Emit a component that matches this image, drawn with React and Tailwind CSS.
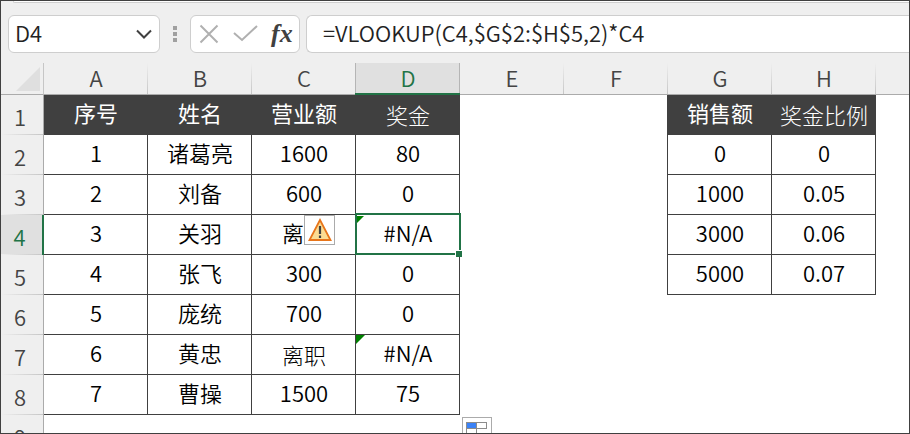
import React, { useState } from "react";

const columns = ["A", "B", "C", "D", "E", "F", "G", "H"];

const rows = [
  ["序号", "姓名", "营业额", "奖金", "", "", "销售额", "奖金比例"],
  ["1", "诸葛亮", "1600", "80", "", "", "0", "0"],
  ["2", "刘备", "600", "0", "", "", "1000", "0.05"],
  ["3", "关羽", "离职", "#N/A", "", "", "3000", "0.06"],
  ["4", "张飞", "300", "0", "", "", "5000", "0.07"],
  ["5", "庞统", "700", "0"],
  ["6", "黄忠", "离职", "#N/A"],
  ["7", "曹操", "1500", "75"],
  [],
];

const active = { row: 3, col: 3 };

// Cells typed in with the thinner face
const thinCells = ["0-3", "0-7", "6-2"];

const cellClass = (row, col) => {
  const value = rows[row][col];
  const next = rows[row][col + 1];
  const thin = thinCells.includes(`${row}-${col}`);
  let cls = "relative p-0 pl-px text-center ";
  if (row === 0 && value) {
    cls += "bg-[#404040] text-white border-b border-r border-[#404040] ";
    cls += thin ? "font-light pb-[2px]" : "font-normal pb-[6px]";
    return cls;
  }
  cls += thin ? "font-light pb-[2px] " : "font-[350] pb-[6px] ";
  if (value) cls += "border-b border-r border-[#404040]";
  else if (next) cls += "border-r border-[#404040]";
  return cls;
};

const FormulaBar = () => {
  const [name, setName] = useState("D4");
  const [formula, setFormula] = useState("=VLOOKUP(C4,$G$2:$H$5,2)*C4");

  return (
    <div className="flex h-[62px] flex-col">
      <div className="ml-3 h-[2px] shrink-0 rounded-bl-md border-b border-l border-[#cfcfcf] bg-white" />
      <div className="flex items-center pt-3 pl-[7px]">
        <div className="flex h-[38px] w-[152px] shrink-0 items-center rounded-md border border-[#cecece] bg-white">
          <input
            aria-label="Name box"
            className="h-full w-24 bg-transparent pb-1 pl-[6px] text-[22px] font-[350] text-[#222] outline-none"
            value={name}
            onChange={(e) => setName(e.target.value)}
          />
          <button type="button" aria-label="Open name list" className="ml-auto mr-[7px]">
            <svg className="h-4 w-4" viewBox="0 0 16 16" fill="none" stroke="#404040" strokeWidth="2">
              <path d="M1 4.5 8 11.5 15 4.5" />
            </svg>
          </button>
        </div>
        <div className="ml-[13px] flex w-1 shrink-0 flex-col gap-[2px]">
          <span className="h-1 w-1 bg-[#a0a0a0]" />
          <span className="h-1 w-1 bg-[#a0a0a0]" />
          <span className="h-1 w-1 bg-[#a0a0a0]" />
        </div>
        <div className="ml-[13px] flex h-[38px] w-[110px] shrink-0 items-center rounded-md border border-[#cecece] bg-white pl-2">
          <button type="button" aria-label="Cancel">
            <svg className="h-5 w-5" viewBox="0 0 20 20" fill="none" stroke="#b0b0b0" strokeWidth="2">
              <path d="M1.5 1.5 18.5 18.5M18.5 1.5 1.5 18.5" />
            </svg>
          </button>
          <button type="button" aria-label="Enter" className="ml-3">
            <svg className="h-5 w-7" viewBox="0 0 28 20" fill="none" stroke="#b0b0b0" strokeWidth="2">
              <path d="M3 9 11 16 26 2" />
            </svg>
          </button>
          <button
            type="button"
            aria-label="Insert function"
            className="ml-3 font-['Liberation_Serif',serif] text-[26px] leading-7 font-bold text-[#404040] italic"
          >
            fx
          </button>
        </div>
        <input
          aria-label="Formula"
          className="ml-[6px] h-[38px] min-w-0 flex-1 rounded-l-md border border-r-0 border-[#cecece] bg-white pb-1 pl-4 text-[22px] font-[350] text-[#222] outline-none"
          value={formula}
          onChange={(e) => setFormula(e.target.value)}
        />
      </div>
    </div>
  );
};

const WarningButton = () => (
  <button
    type="button"
    aria-label="Error options"
    className="absolute top-0 left-[52px] z-10 flex h-[30px] w-[31px] items-center justify-center border border-[#ababab] bg-white"
  >
    <svg className="h-6 w-6" viewBox="0 0 24 24">
      <path d="M12 2 22.500 22H1.500Z" fill="#fbdc93" stroke="#e8751a" strokeWidth="1.800" />
      <path d="M12 8V16M12 17.500V20" stroke="#404040" strokeWidth="2.200" />
    </svg>
  </button>
);

const FillOptions = () => (
  <button
    type="button"
    aria-label="Auto fill options"
    className="absolute top-[2px] left-[2px] z-10 h-[30px] w-[30px] border border-[#ababab] bg-white"
  >
    <svg className="h-7 w-7" viewBox="0 0 28 28" fill="none" stroke="#8c8c8c">
      <rect x="3.500" y="4.500" width="10" height="6" fill="#3b82f6" />
      <rect x="13.500" y="4.500" width="10" height="6" />
      <path d="M3.500 10.500V23.500H13.500V10.500" />
    </svg>
  </button>
);

const Cell = ({ row, col }) => {
  const value = rows[row][col];
  const isActive = row === active.row && col === active.col;

  return (
    <td className={cellClass(row, col)}>
      {value}
      {value === "#N/A" && (
        <span
          className={
            isActive
              ? "absolute top-px left-px h-[7px] w-[7px] bg-[#008000] [clip-path:polygon(0_0,100%_0,0_100%)]"
              : "absolute top-0 left-0 h-[9px] w-[9px] bg-[#008000] [clip-path:polygon(0_0,100%_0,0_100%)]"
          }
        />
      )}
      {isActive && (
        <span className="absolute -top-[2px] -right-[2px] -bottom-px -left-px z-20 border-2 border-[#217346]">
          <span className="absolute -right-[3px] -bottom-[4px] h-[7px] w-[7px] border-t border-l border-white bg-[#217346]" />
        </span>
      )}
      {row === 3 && col === 2 && <WarningButton />}
      {row === 8 && col === 4 && <FillOptions />}
    </td>
  );
};

const Sheet = () => (
  <table className="w-full table-fixed border-separate border-spacing-0 text-[22px] leading-8 text-black">
    <colgroup>
      <col className="w-[43px]" />
      {columns.map((c) => (
        <col key={c} className="w-[104px]" />
      ))}
      <col />
    </colgroup>
    <thead className="leading-7">
      <tr className="h-8 text-[#444]">
        <th className="relative border-r border-b border-[#ababab] border-r-[#c6c6c6] bg-[#efefef] p-0">
          <span className="absolute right-[3px] bottom-[3px] h-6 w-6 bg-[#dfdfdf] [clip-path:polygon(100%_0,100%_100%,0_100%)]" />
        </th>
        {columns.map((c, i) => (
          <th
            key={c}
            scope="col"
            className={
              i === active.col
                ? "relative bg-[#e0e0e0] p-0 pb-1 font-[350] text-[#217346]"
                : "relative border-b border-[#ababab] bg-[#efefef] p-0 pb-[3px] font-[350]"
            }
          >
            {c}
            {i === active.col ? (
              <>
                <span className="absolute -left-px top-0 bottom-0 w-px bg-[#b5b5b5]" />
                <span className="absolute right-0 top-0 bottom-0 w-px bg-[#b5b5b5]" />
                <span className="absolute -left-px right-0 bottom-0 h-[2px] bg-[#217346]" />
              </>
            ) : (
              <span className="absolute right-0 top-0 bottom-0 w-px bg-linear-to-b from-[#efefef] to-[#c6c6c6]" />
            )}
          </th>
        ))}
        <th className="border-b border-[#ababab] bg-[#efefef] p-0" />
      </tr>
    </thead>
    <tbody>
      {rows.map((_, r) => (
        <tr key={r} className="h-10">
          <th
            scope="row"
            className={
              r === active.row
                ? "relative border-r-2 border-[#217346] bg-[#e0e0e0] p-0 pt-[2px] pr-1 font-[350] text-[#217346]"
                : "relative border-r border-[#ababab] bg-[#efefef] p-0 pt-[2px] pr-1 font-[350] text-[#444]"
            }
          >
            {r + 1}
            <span className="absolute right-0 bottom-0 left-0 h-px bg-linear-to-r from-[#efefef] to-[#c6c6c6]" />
          </th>
          {columns.map((c, i) => (
            <Cell key={c} row={r} col={i} />
          ))}
          <td className="p-0" />
        </tr>
      ))}
    </tbody>
  </table>
);

const App = () => {
  return (
    <div className="h-screen overflow-hidden border border-[#404040] bg-white font-['Noto_Sans_CJK_SC',sans-serif]">
      <div className="bg-[#efefef]">
        <FormulaBar />
      </div>
      <Sheet />
    </div>
  );
};

export default App;
